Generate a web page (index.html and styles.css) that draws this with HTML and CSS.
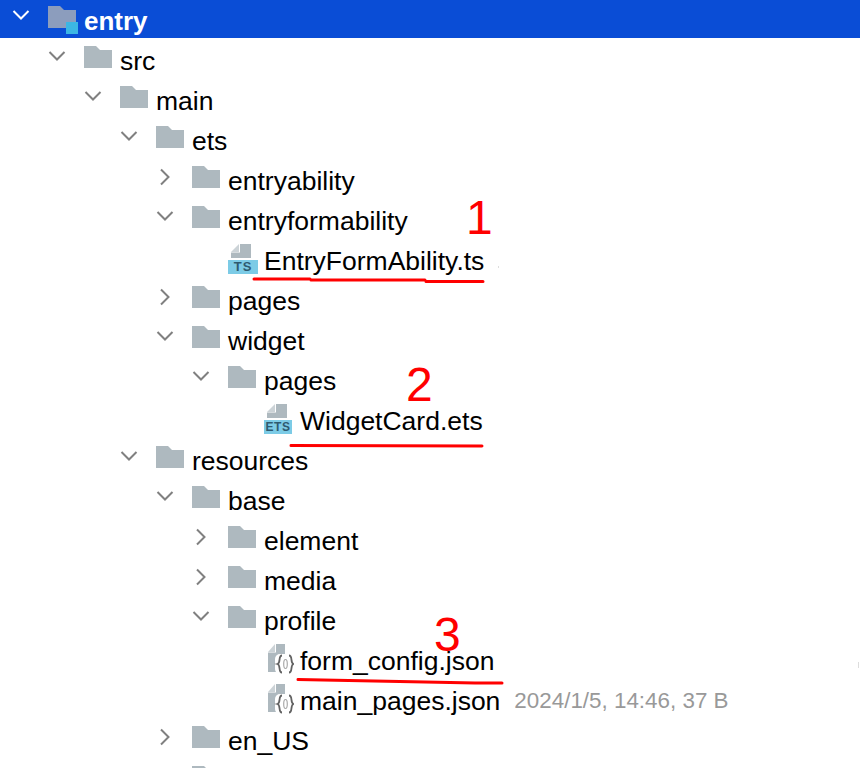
FILE: index.html
```html
<!DOCTYPE html>
<html lang="en">
<head>
<meta charset="utf-8">
<title>Project tree</title>
<link rel="stylesheet" href="styles.css">
</head>
<body>
<svg class="defs" width="0" height="0" aria-hidden="true">
  <symbol id="folder" viewBox="0 0 28 22"><path d="M0 0H12L16 4H28V22H0Z" fill="#aeb9bf"/></symbol>
  <symbol id="folder-head" viewBox="0 0 28 22"><path d="M0 0H12L16 4H28V22H0Z" fill="#8c9dbd"/></symbol>
  <symbol id="down" viewBox="0 0 18 10"><path d="M1.500 1L9 8.500L16.500 1" fill="none" stroke="currentColor" stroke-width="2"/></symbol>
  <symbol id="right" viewBox="0 0 10 18"><path d="M1 1.500L8.500 9L1 16.500" fill="none" stroke="currentColor" stroke-width="2"/></symbol>
  <symbol id="doc" viewBox="0 0 30 18"><path d="M3 10L11 2V10Z" fill="#ccd3d7"/><path d="M12 2H23V16H12Z" fill="#aeb9bf"/><path d="M3 10.500H23V16H3Z" fill="#aeb9bf"/></symbol>
  <symbol id="json" viewBox="0 0 30 34"><path d="M4 10L11 2V10Z" fill="#ccd3d7"/><path d="M12 2H21V12H12Z" fill="#aeb9bf"/><path d="M4 10.500H21V30H4Z" fill="#aeb9bf"/><rect x="11" y="12" width="19" height="20" rx="5" fill="#fff"/><path d="M18 13.500C14 13.500 17 21 13.500 22C17 23 14 30.500 18 30.500M25 13.500C29 13.500 26 21 29.500 22C26 23 29 30.500 25 30.500" fill="none" stroke="#626262" stroke-width="1.800"/><ellipse cx="21.500" cy="22" rx="1.800" ry="4.500" fill="none" stroke="#a8a8a8" stroke-width="1.200"/></symbol>
</svg>
<main class="tree">
  <div class="head">
    <svg class="chev-down chev-white"><use href="#down"/></svg>
    <span class="module-icon"><svg class="folder"><use href="#folder-head"/></svg><i class="module-badge"></i></span>
    <span class="head-label">entry</span>
  </div>
  <div class="rows">
    <div class="row l1"><svg class="chev-down"><use href="#down"/></svg><svg class="folder"><use href="#folder"/></svg><span>src</span></div>
    <div class="row l2"><svg class="chev-down"><use href="#down"/></svg><svg class="folder"><use href="#folder"/></svg><span>main</span></div>
    <div class="row l3"><svg class="chev-down"><use href="#down"/></svg><svg class="folder"><use href="#folder"/></svg><span>ets</span></div>
    <div class="row l4"><svg class="chev-right"><use href="#right"/></svg><svg class="folder"><use href="#folder"/></svg><span>entryability</span></div>
    <div class="row l4"><svg class="chev-down"><use href="#down"/></svg><svg class="folder"><use href="#folder"/></svg><span>entryformability</span></div>
    <div class="row l5 file"><span class="file-icon"><svg class="doc"><use href="#doc"/></svg><b class="tag tag-ts">TS</b></span><span>EntryFormAbility.ts</span></div>
    <div class="row l4"><svg class="chev-right"><use href="#right"/></svg><svg class="folder"><use href="#folder"/></svg><span>pages</span></div>
    <div class="row l4"><svg class="chev-down"><use href="#down"/></svg><svg class="folder"><use href="#folder"/></svg><span>widget</span></div>
    <div class="row l5"><svg class="chev-down"><use href="#down"/></svg><svg class="folder"><use href="#folder"/></svg><span>pages</span></div>
    <div class="row l6 file"><span class="file-icon"><svg class="doc"><use href="#doc"/></svg><b class="tag tag-ets">ETS</b></span><span>WidgetCard.ets</span></div>
    <div class="row l3"><svg class="chev-down"><use href="#down"/></svg><svg class="folder"><use href="#folder"/></svg><span>resources</span></div>
    <div class="row l4"><svg class="chev-down"><use href="#down"/></svg><svg class="folder"><use href="#folder"/></svg><span>base</span></div>
    <div class="row l5"><svg class="chev-right"><use href="#right"/></svg><svg class="folder"><use href="#folder"/></svg><span>element</span></div>
    <div class="row l5"><svg class="chev-right"><use href="#right"/></svg><svg class="folder"><use href="#folder"/></svg><span>media</span></div>
    <div class="row l5"><svg class="chev-down"><use href="#down"/></svg><svg class="folder"><use href="#folder"/></svg><span>profile</span></div>
    <div class="row l6 file"><span class="file-icon"><svg class="json"><use href="#json"/></svg></span><span>form_config.json</span></div>
    <div class="row l6 file"><span class="file-icon"><svg class="json"><use href="#json"/></svg></span><span>main_pages.json</span><span class="meta">2024/1/5, 14:46, 37 B</span></div>
    <div class="row l4"><svg class="chev-right"><use href="#right"/></svg><svg class="folder"><use href="#folder"/></svg><span>en_US</span></div>
    <div class="row l5 tail"><svg class="folder"><use href="#folder"/></svg></div>
  </div>
</main>
<svg class="ink" viewBox="0 0 860 768" aria-hidden="true">
  <path d="M254 279L310 279M311 280L425 280M426 281.500L483 281.500" />
  <path d="M291 445.500L482 446" />
  <path d="M298 679.500L323 680L374 681L425 682L475 683L502 683" />
  <path class="speck" d="M498.500 266V268M858.500 662V668" />
</svg>
<span class="note note-1">1</span>
<span class="note note-2">2</span>
<span class="note note-3">3</span>
</body>
</html>
```
FILE: styles.css
```css
* { box-sizing: border-box; }
html, body { margin: 0; height: 768px; overflow: hidden; background: #fff; }
body { position: relative; font-family: "Liberation Sans", Arial, sans-serif; color: #000; }
.defs { position: absolute; }
.tree { display: flex; flex-direction: column; }
.head { height: 38px; display: flex; align-items: center; background: #0a4dd6; color: #fff; padding-left: 12px; flex: none; }
.head-label { margin-left: 6px; font-size: 26px; font-weight: 700; position: relative; top: 2px; }
.module-icon { position: relative; width: 30px; height: 38px; display: block; flex: none; }
.module-icon .folder { position: absolute; left: 0; top: 6px; margin: 0; }
.module-badge { position: absolute; left: 18px; top: 22px; width: 12px; height: 12px; background: #3cb6e4; }
.rows { margin-top: 3px; display: flex; flex-direction: column; }
.row { height: 40px; flex: none; display: flex; align-items: center; font-size: 26.500px; white-space: nowrap; }
.l1 { padding-left: 48px; }
.l2 { padding-left: 84px; }
.l3 { padding-left: 120px; }
.l4 { padding-left: 156px; }
.l5 { padding-left: 192px; }
.l6 { padding-left: 228px; }
.chev-down, .chev-right { color: #808080; flex: none; }
.chev-down { width: 18px; height: 10px; margin-right: 18px; margin-top: -10px; }
.chev-right { width: 10px; height: 18px; margin: -8px 22px 0 4px; }
.head .chev-white { color: #fff; margin-top: -8px; }
.folder { width: 28px; height: 22px; margin-right: 8px; margin-top: -8px; flex: none; }
.file.l5 { padding-left: 228px; }
.file.l6 { padding-left: 264px; }
.tail { padding-left: 192px; }
.file-icon { position: relative; width: 30px; height: 34px; margin-right: 6px; margin-top: -4px; flex: none; display: block; }
.doc { width: 30px; height: 18px; display: block; }
.json { width: 30px; height: 34px; display: block; }
.tag { position: absolute; left: 0; top: 18px; height: 14px; background: #7ccbe6; color: #2e5a70; line-height: 14px; text-align: center; }
.tag-ts { width: 30px; font-size: 13px; letter-spacing: 1px; }
.tag-ets { width: 28px; font-size: 12px; letter-spacing: .5px; }
.meta { margin-left: 14px; font-size: 22.400px; color: #999; }
.ink { position: absolute; left: 0; top: 0; width: 860px; height: 768px; pointer-events: none; }
.ink path { fill: none; stroke: #f00; stroke-width: 3; stroke-linecap: round; }
.ink .speck { stroke: #ddd; stroke-width: 1; stroke-linecap: butt; }
.note { position: absolute; color: #f00; font-size: 48px; line-height: 48px; }
.note-1 { left: 466px; top: 194px; }
.note-2 { left: 406px; top: 361px; }
.note-3 { left: 434px; top: 611px; }
```
